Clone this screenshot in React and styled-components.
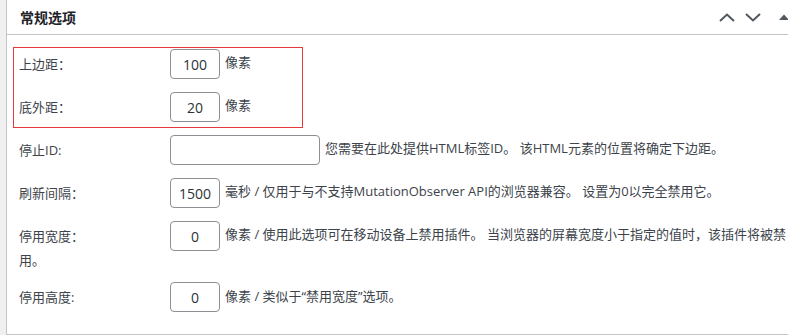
import React from "react";
import styled, { createGlobalStyle } from "styled-components";

const Global = createGlobalStyle`
  html, body { margin: 0; padding: 0; }
  body {
    background: #f0f0f1;
    overflow: hidden;
    font-family: "Open Sans", "Noto Sans CJK SC", sans-serif;
    color: #3c434a;
  }
`;

const Page = styled.div`
  padding-left: 6px;
  width: 900px;
`;

const Postbox = styled.section`
  width: 797px;
  box-sizing: border-box;
  margin-top: -1px;
  background: #fff;
  border: 1px solid #c3c4c7;
`;

const Header = styled.div`
  display: flex;
  align-items: center;
  height: 34px;
  border-bottom: 1px solid #c3c4c7;
`;

const Title = styled.h2`
  flex: 1;
  margin: 0;
  padding: 0 12px 0 13px;
  font-size: 14px;
  font-weight: 700;
  line-height: 34px;
  color: #1d2327;
  font-family: "Noto Sans CJK SC", sans-serif;
`;

const Actions = styled.div`
  display: flex;
  align-items: stretch;
  height: 34px;
`;

const HandleButton = styled.button`
  display: flex;
  align-items: center;
  justify-content: center;
  width: ${(p) => (p.$wide ? "36px" : "26px")};
  height: 34px;
  padding: 0;
  border: 0;
  background: transparent;
  color: #50575e;
  cursor: pointer;
`;

const Inside = styled.div`
  padding: 14px 12px 22px 12px;
`;

const Form = styled.div`
  display: flex;
  flex-direction: column;
  gap: 13px;
`;

const Group = styled.div`
  position: relative;
  display: flex;
  flex-direction: column;
  gap: 13px;

  &::before {
    content: "";
    position: absolute;
    top: -2px;
    left: -6px;
    width: 290px;
    height: 81px;
    box-sizing: border-box;
    border: 1px solid #e5393b;
    pointer-events: none;
  }
`;

const Row = styled.div`
  font-size: 13px;
  line-height: 1.4;
  color: #3c434a;
`;

const Label = styled.label`
  display: inline-block;
  width: 151px;
  vertical-align: middle;
`;

const Field = styled.input`
  display: inline-block;
  vertical-align: middle;
  box-sizing: border-box;
  width: ${(p) => (p.$wide ? "150px" : "50px")};
  height: 30px;
  margin: 0;
  padding: 0 8px;
  border: 1px solid #8c8f94;
  border-radius: 4px;
  background: #fff;
  color: #2c3338;
  font-family: "Open Sans", "Noto Sans CJK SC", sans-serif;
  font-size: 14px;
  text-align: center;
  outline: none;
`;

const Desc = styled.span`
  margin-left: 5px;
`;

const ChevronUp = () => (
  <svg width="16" height="9" viewBox="0 0 16 9">
    <polyline points="1,8 8,1.5 15,8" fill="none" stroke="currentColor" strokeWidth="2" />
  </svg>
);

const ChevronDown = () => (
  <svg width="16" height="9" viewBox="0 0 16 9">
    <polyline points="1,1 8,7.5 15,1" fill="none" stroke="currentColor" strokeWidth="2" />
  </svg>
);

const TriangleUp = () => (
  <svg width="10" height="6" viewBox="0 0 10 6">
    <polygon points="0,6 5,0.5 10,6" fill="currentColor" />
  </svg>
);

const rows = [
  { label: "停止ID:", value: "", wide: true, desc: "您需要在此处提供HTML标签ID。 该HTML元素的位置将确定下边距。" },
  { label: "刷新间隔：", value: "1500", desc: "毫秒 / 仅用于与不支持MutationObserver API的浏览器兼容。 设置为0以完全禁用它。" },
  { label: "停用宽度：", value: "0", desc: "像素 / 使用此选项可在移动设备上禁用插件。 当浏览器的屏幕宽度小于指定的值时，该插件将被禁用。" },
  { label: "停用高度:", value: "0", desc: "像素 / 类似于“禁用宽度”选项。" },
];

const FieldRow = ({ label, value, wide, desc }) => (
  <Row>
    <Label>{label}</Label>
    <Field type="text" defaultValue={value} $wide={wide} />
    <Desc>{desc}</Desc>
  </Row>
);

export default function App() {
  return (
    <>
      <Global />
      <Page>
        <Postbox>
          <Header>
            <Title>常规选项</Title>
            <Actions>
              <HandleButton aria-label="上移"><ChevronUp /></HandleButton>
              <HandleButton aria-label="下移"><ChevronDown /></HandleButton>
              <HandleButton $wide aria-label="切换"><TriangleUp /></HandleButton>
            </Actions>
          </Header>
          <Inside>
            <Form>
              <Group>
                <FieldRow label="上边距：" value="100" desc="像素" />
                <FieldRow label="底外距：" value="20" desc="像素" />
              </Group>
              {rows.map((r) => (
                <FieldRow key={r.label} {...r} />
              ))}
            </Form>
          </Inside>
        </Postbox>
      </Page>
    </>
  );
}
